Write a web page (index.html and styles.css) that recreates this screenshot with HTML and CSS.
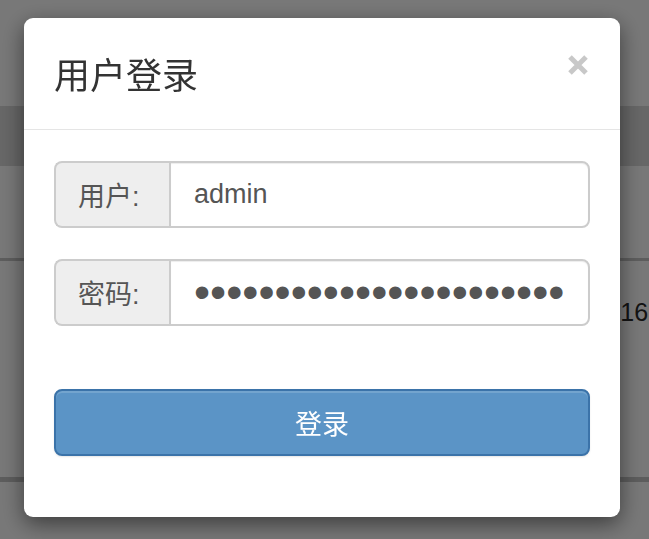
FILE: index.html
```html
<!DOCTYPE html>
<html lang="zh-CN">
<head>
<meta charset="utf-8">
<title>用户登录</title>
<link rel="stylesheet" href="styles.css">
</head>
<body>
<div class="page">
  <div class="topbar"></div>
  <div class="table">
    <div class="thead"></div>
    <div class="row row-first"></div>
    <div class="row row-second">
      <span class="cell-spacer"></span>
      <span class="cell">-16</span>
    </div>
    <div class="row"></div>
  </div>
</div>
<div class="backdrop"></div>
<div class="modal">
  <div class="modal-header">
    <h4 class="modal-title">用户登录</h4>
    <button class="close" type="button" aria-label="关闭">
      <svg width="22" height="22" viewBox="0 0 22 22"><path d="M3 3 L19 19 M19 3 L3 19" stroke="#c8c8c8" stroke-width="5" fill="none"/></svg>
    </button>
  </div>
  <form class="modal-body">
    <div class="input-group">
      <span class="addon">用户:</span>
      <input class="field" type="text" value="admin">
    </div>
    <div class="input-group">
      <span class="addon">密码:</span>
      <input class="field field-pass" type="password" value="abcdefghijklmnopqrstuvw">
    </div>
    <button class="btn-login" type="button">登录</button>
  </form>
</div>
</body>
</html>
```
FILE: styles.css
```css
html, body {
  margin: 0;
  padding: 0;
  height: 100%;
  overflow: hidden;
}
body {
  font-family: "Liberation Sans", "Noto Sans CJK SC", sans-serif;
  background: #ffffff;
  color: #333333;
}
.page {
  width: 100%;
}
.topbar {
  height: 106px;
}
.thead {
  height: 60px;
  background: #dadada;
}
.row {
  border-bottom: 3px solid #c6c6c6;
}
.row-first {
  height: 92px;
}
.row-second {
  height: 218px;
  display: grid;
  grid-template-columns: 612px auto;
  padding-top: 33px;
  box-sizing: border-box;
  border-bottom-width: 2px;
}
.cell {
  font-size: 25px;
  line-height: 36px;
  color: #2a2a2a;
  white-space: nowrap;
}
.backdrop {
  position: fixed;
  inset: 0;
  background: rgba(0, 0, 0, 0.53);
}
.modal {
  position: fixed;
  top: 18px;
  left: 24px;
  width: 596px;
  background: #ffffff;
  border-radius: 9px;
  box-shadow: 0 7px 22px rgba(0, 0, 0, 0.5);
}
.modal-header {
  display: flex;
  justify-content: space-between;
  align-items: flex-start;
  padding: 30px 30px 30px 30px;
  border-bottom: 1px solid #e5e5e5;
  height: 51px;
}
.modal-title {
  margin: 0;
  font-family: "Noto Sans CJK SC", sans-serif;
  font-weight: normal;
  font-size: 36px;
  line-height: 51px;
  color: #333333;
}
.close {
  border: 0;
  background: none;
  padding: 0;
  margin: 6px 1px 0 0;
  width: 22px;
  height: 22px;
  cursor: pointer;
  display: block;
}
.close svg {
  display: block;
}
.modal-body {
  display: flex;
  flex-direction: column;
  gap: 31px;
  padding: 31px 30px 61px 30px;
  margin: 0;
}
.input-group {
  display: flex;
  height: 67px;
}
.addon {
  box-sizing: border-box;
  width: 115px;
  flex: none;
  display: flex;
  align-items: center;
  padding-left: 22px;
  background: #eeeeee;
  border: 2px solid #cccccc;
  border-right: 0;
  border-radius: 8px 0 0 8px;
  color: #555555;
  font-size: 27px;
}
.field {
  box-sizing: border-box;
  flex: 1;
  min-width: 0;
  height: 67px;
  margin: 0;
  padding: 0 23px;
  border: 2px solid #cccccc;
  border-radius: 0 8px 8px 0;
  background: #ffffff;
  box-shadow: inset 0 1px 1px rgba(0, 0, 0, 0.075);
  color: #555555;
  font-family: "Liberation Sans", sans-serif;
  font-size: 27px;
  outline: none;
}
.field-pass {
  font-size: 46px;
  padding-bottom: 2px;
}
.btn-login {
  box-sizing: border-box;
  margin-top: 32px;
  height: 67px;
  width: 100%;
  background: #5b94c6;
  border: 2px solid #3b73a9;
  border-radius: 8px;
  box-shadow: inset 0 2px 0 rgba(255, 255, 255, 0.15), 0 1px 2px rgba(0, 0, 0, 0.1);
  color: #ffffff;
  font-family: "Noto Sans CJK SC", sans-serif;
  font-size: 27px;
  cursor: pointer;
}
```
